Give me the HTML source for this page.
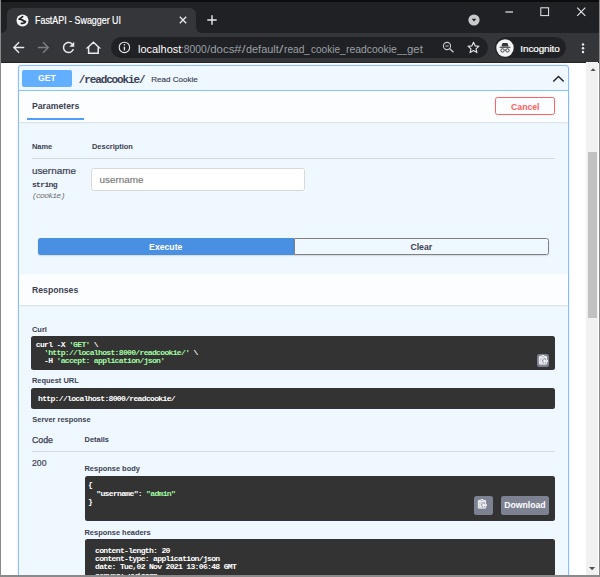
<!DOCTYPE html>
<html>
<head>
<meta charset="utf-8">
<title>FastAPI - Swagger UI</title>
<style>
html,body{margin:0;padding:0;}
body{width:600px;height:577px;overflow:hidden;background:#fff;position:relative;font-family:"Liberation Sans",sans-serif;color:#3b4151;}
#win{position:absolute;left:0;top:0;width:600px;height:577px;overflow:hidden;background:#fff;}
#win>div,#win>svg{position:absolute;}
.t{white-space:nowrap;}
.code{background:#333;border-radius:2.5px;}
.band{background:#fbfdff;box-shadow:0 1px 1.5px rgba(0,0,0,.1);}
.line{height:1px;background:#d4dae1;}
.btn7{background:#7d8293;border-radius:2.5px;}
</style>
</head>
<body>
<div id="win">
  <!-- browser frame -->
  <div style="left:0;top:0;width:600px;height:33px;background:#202124;"></div>
  <div style="left:7px;top:8px;width:189px;height:26px;background:#35363a;border-radius:6px 6px 0 0;"></div>
  <div style="left:1px;top:27px;width:6px;height:6px;background:#35363a;"></div>
  <div style="left:-5px;top:21px;width:12px;height:12px;background:#202124;border-radius:0 0 6px 0;"></div>
  <div style="left:196px;top:27px;width:6px;height:6px;background:#35363a;"></div>
  <div style="left:196px;top:21px;width:12px;height:12px;background:#202124;border-radius:0 0 0 6px;"></div>
  <div style="left:0;top:33px;width:600px;height:28.600px;background:#35363a;border-bottom:0.600px solid #222;"></div>
  <div style="left:111px;top:37px;width:377px;height:21.400px;border-radius:11px;background:#202124;"></div>
  <div style="left:495px;top:37.400px;width:71px;height:20.400px;border-radius:11px;background:#202124;"></div>

  <!-- favicon globe -->
  <svg style="left:16.400px;top:14px" width="13" height="13" viewBox="0 0 13 13">
    <circle cx="6.500" cy="6.500" r="6" fill="#f4f5f6"/>
    <path d="M6.600 2.600 L3.200 5.200 C4.500 5.100 5.400 5.400 6.300 6 C7.400 6.800 8.400 7.400 9.500 7.600 C9.200 8.800 7.600 9.600 5.500 9.300" stroke="#202124" stroke-width="1.800" fill="none" stroke-linejoin="round" stroke-linecap="round"/>
  </svg>
  <!-- tab close -->
  <svg style="left:178.500px;top:16px" width="8" height="8" viewBox="0 0 8 8"><path d="M0.800 0.800 L7.200 7.200 M7.200 0.800 L0.800 7.200" stroke="#e8eaed" stroke-width="1.300" fill="none"/></svg>
  <!-- new tab plus -->
  <svg style="left:207px;top:15px" width="10" height="10" viewBox="0 0 10 10"><path d="M5 0.300 V9.700 M0.300 5 H9.700" stroke="#e8eaed" stroke-width="1.400" fill="none"/></svg>
  <!-- tab search -->
  <svg style="left:468.200px;top:14.200px" width="12" height="12" viewBox="0 0 12 12"><circle cx="6" cy="6" r="5.600" fill="#c8cacc"/><path d="M3.700 4.800 H8.300 L6 7.600 Z" fill="#202124"/></svg>
  <!-- window controls -->
  <svg style="left:500px;top:4px" width="96" height="16" viewBox="0 0 96 16">
    <path d="M5.400 8 H13" stroke="#e8eaed" stroke-width="1.200" fill="none"/>
    <rect x="40.800" y="3.800" width="7.800" height="7.800" stroke="#e8eaed" stroke-width="1" fill="none"/>
    <path d="M77.200 3.700 L85.300 11.800 M85.300 3.700 L77.200 11.800" stroke="#e8eaed" stroke-width="1.100" fill="none"/>
  </svg>
  <!-- nav icons -->
  <svg style="left:9.650px;top:39.150px" width="17.100" height="17.100" viewBox="0 0 24 24"><path d="M20 11H7.830l5.590-5.590L12 4l-8 8 8 8 1.410-1.410L7.830 13H20v-2z" fill="#e8eaed"/></svg>
  <svg style="left:35.150px;top:39.150px" width="17.100" height="17.100" viewBox="0 0 24 24"><path d="M12 4l-1.410 1.410L16.170 11H4v2h12.170l-5.580 5.590L12 20l8-8z" fill="#7c7e82"/></svg>
  <svg style="left:59.950px;top:39.400px" width="17.100" height="17.100" viewBox="0 0 24 24"><path d="M17.650 6.350C16.200 4.900 14.210 4 12 4c-4.420 0-7.990 3.580-7.990 8s3.570 8 7.990 8c3.730 0 6.840-2.550 7.730-6h-2.080c-.820 2.330-3.040 4-5.650 4-3.310 0-6-2.690-6-6s2.690-6 6-6c1.660 0 3.140.690 4.220 1.780L13 11h7V4l-2.350 2.350z" fill="#e8eaed"/></svg>
  <svg style="left:85px;top:40px" width="17" height="16" viewBox="0 0 17 16"><path d="M2.500 7.700 L8.400 2.200 L14.300 7.700 H13.200 V13.200 H3.600 V7.700 Z" stroke="#e8eaed" stroke-width="1.500" fill="none" stroke-linejoin="miter"/></svg>
  <!-- info -->
  <svg style="left:118px;top:41.300px" width="13" height="13" viewBox="0 0 13 13"><circle cx="6.400" cy="6.400" r="5.200" stroke="#e8eaed" stroke-width="1.100" fill="none"/><path d="M6.400 5.700 V9.400" stroke="#e8eaed" stroke-width="1.300"/><circle cx="6.400" cy="3.800" r="0.800" fill="#e8eaed"/></svg>
  <!-- zoom-out -->
  <svg style="left:442.200px;top:41.400px" width="13" height="13" viewBox="0 0 13 13"><circle cx="5" cy="5" r="3.600" stroke="#c6c8cb" stroke-width="1.100" fill="none"/><path d="M7.700 7.700 L11.500 11.200" stroke="#c6c8cb" stroke-width="1.400"/><path d="M3.300 5 H6.700" stroke="#c6c8cb" stroke-width="1"/></svg>
  <!-- star -->
  <svg style="left:467.400px;top:41.200px" width="13" height="13" viewBox="0 0 14 14"><path d="M7 1.300 L8.700 5.200 L12.900 5.600 L9.700 8.400 L10.700 12.500 L7 10.300 L3.300 12.500 L4.300 8.400 L1.100 5.600 L5.300 5.200 Z" stroke="#e8eaed" stroke-width="1.200" fill="none" stroke-linejoin="round"/></svg>
  <!-- incognito avatar -->
  <svg style="left:496px;top:38.600px" width="18" height="18" viewBox="0 0 18 18"><circle cx="9" cy="9" r="8.700" fill="#f1f3f4"/><path d="M5.400 7.600 L6.500 4 H11.500 L12.600 7.600 Z" fill="#35363a"/><path d="M3.600 8.300 H14.400" stroke="#35363a" stroke-width="1"/><circle cx="6.500" cy="11.400" r="1.700" stroke="#35363a" stroke-width="0.900" fill="none"/><circle cx="11.500" cy="11.400" r="1.700" stroke="#35363a" stroke-width="0.900" fill="none"/><path d="M8.200 11 H9.800" stroke="#35363a" stroke-width="0.800"/></svg>
  <!-- menu dots -->
  <svg style="left:580.700px;top:43px" width="4" height="11" viewBox="0 0 4 11"><circle cx="2" cy="1.500" r="1.250" fill="#e8eaed"/><circle cx="2" cy="5.200" r="1.250" fill="#e8eaed"/><circle cx="2" cy="8.900" r="1.250" fill="#e8eaed"/></svg>

  <!-- operation block -->
  <div style="left:18px;top:65.200px;width:549.300px;height:530px;border:1px solid #86c1fe;border-radius:3px;background:#eff7ff;box-shadow:0 0 2px rgba(0,0,0,.15);"></div>
  <div style="left:21.900px;top:69.700px;width:50.100px;height:17px;background:#61affe;border-radius:2px;"></div>
  <svg style="left:552px;top:72.500px" width="13" height="12" viewBox="0 0 13 12"><path d="M1.300 8.600 L6.500 3.500 L11.700 8.600" stroke="#222" stroke-width="1.400" fill="none"/></svg>
  <div style="left:19px;top:90px;width:549px;height:1px;background:#86c1fe;"></div>

  <!-- Parameters header band -->
  <div class="band" style="left:19px;top:91px;width:549.300px;height:30.800px;"></div>
  <div style="left:26.800px;top:117.900px;width:57.200px;height:2.500px;background:#4e9efc;"></div>
  <div style="left:495px;top:97px;width:58.200px;height:16.200px;border:1.200px solid #ff6060;border-radius:2.500px;"></div>

  <!-- params table -->
  <div class="line" style="left:32px;top:157.700px;width:523px;"></div>
  <div style="left:91px;top:168.300px;width:212px;height:20.800px;border:0.800px solid #d9d9d9;border-radius:2.500px;background:#fff;"></div>

  <!-- execute / clear -->
  <div style="left:37.500px;top:237.800px;width:256.500px;height:17.500px;background:#4990e2;border-radius:2.500px 0 0 2.500px;box-shadow:0 1px 1.500px rgba(0,0,0,.12);"></div>
  <div style="left:294px;top:237.800px;width:252.700px;height:15.400px;border:1.200px solid #808080;border-radius:0 2.500px 2.500px 0;box-shadow:0 1px 1.500px rgba(0,0,0,.12);"></div>

  <!-- Responses header band -->
  <div class="band" style="left:19px;top:273.700px;width:549.300px;height:31.700px;"></div>

  <!-- code blocks -->
  <div class="code" style="left:31.200px;top:336.300px;width:523.800px;height:33.300px;"></div>
  <div class="btn7" style="left:536.700px;top:354.200px;width:12.500px;height:12.500px;"></div>
  <svg style="left:537.900px;top:355.400px" width="10.540" height="9.920" viewBox="0 0 17 16"><g transform="translate(2,-1)"><path fill="#fff" stroke="#fff" stroke-width="0.800" fill-rule="evenodd" d="M2 13h4v1H2v-1zm5-6H2v1h5V7zm2 3V8l-3 3 3 3v-2h5v-2H9zM4.500 9H2v1h2.500V9zM2 12h2.500v-1H2v1zm9 1h1v2c-.020.280-.110.520-.300.700-.190.180-.420.280-.700.300H1c-.550 0-1-.450-1-1V4c0-.550.450-1 1-1h3c0-1.110.890-2 2-2 1.110 0 2 .890 2 2h3c.550 0 1 .450 1 1v5h-1V6H1v9h10v-2zM2 5h8c0-.550-.450-1-1-1H8c-.550 0-1-.450-1-1s-.450-1-1-1-1 .450-1 1-.450 1-1 1H3c-.550 0-1 .450-1 1z"/></g></svg>
  <div class="code" style="left:31.200px;top:388.200px;width:523.800px;height:20.500px;"></div>
  <div class="line" style="left:32px;top:450.800px;width:523px;"></div>
  <div class="code" style="left:84.500px;top:476.300px;width:470.500px;height:45px;"></div>
  <div class="btn7" style="left:473.800px;top:496.300px;width:19.200px;height:18.700px;"></div>
  <svg style="left:476.900px;top:499.100px" width="10.540" height="9.920" viewBox="0 0 17 16"><g transform="translate(2,-1)"><path fill="#fff" stroke="#fff" stroke-width="0.800" fill-rule="evenodd" d="M2 13h4v1H2v-1zm5-6H2v1h5V7zm2 3V8l-3 3 3 3v-2h5v-2H9zM4.500 9H2v1h2.500V9zM2 12h2.500v-1H2v1zm9 1h1v2c-.020.280-.110.520-.300.700-.190.180-.420.280-.700.300H1c-.550 0-1-.450-1-1V4c0-.550.450-1 1-1h3c0-1.110.890-2 2-2 1.110 0 2 .890 2 2h3c.550 0 1 .450 1 1v5h-1V6H1v9h10v-2zM2 5h8c0-.550-.450-1-1-1H8c-.550 0-1-.450-1-1s-.450-1-1-1-1 .450-1 1-.450 1-1 1H3c-.550 0-1 .450-1 1z"/></g></svg>
  <div class="btn7" style="left:500.500px;top:496.300px;width:48.800px;height:18.700px;"></div>
  <div class="code" style="left:84.500px;top:539.200px;width:470.500px;height:60px;"></div>

  <div class="t" id="ttl" style="top:13.83px;font-size:10.30px;line-height:13px;font-family:'Liberation Sans',sans-serif;color:#fff;left:35.40px;transform:scaleX(0.8636);transform-origin:0 0;-webkit-text-stroke:0.2px #fff;">FastAPI - Swagger UI</div>
  <div class="t" id="url1" style="top:40.65px;font-size:11.70px;line-height:15px;font-family:'Liberation Sans',sans-serif;color:#fff;left:137.50px;transform:scaleX(0.9384);transform-origin:0 0;">localhost</div>
  <div class="t" id="url2" style="top:40.65px;font-size:11.70px;line-height:15px;font-family:'Liberation Sans',sans-serif;color:#9aa0a6;left:180.80px;transform:scaleX(0.8821);transform-origin:0 0;">:8000</div>
  <div class="t" id="url3" style="top:40.65px;font-size:11.70px;line-height:15px;font-family:'Liberation Sans',sans-serif;color:#9aa0a6;left:206.60px;transform:scaleX(0.9808);transform-origin:0 0;">/docs</div>
  <div class="t" id="url4" style="top:40.65px;font-size:11.70px;line-height:15px;font-family:'Liberation Sans',sans-serif;color:#9aa0a6;left:234.00px;transform:scaleX(1.1795);transform-origin:0 0;">#/</div>
  <div class="t" id="url5" style="top:40.65px;font-size:11.70px;line-height:15px;font-family:'Liberation Sans',sans-serif;color:#9aa0a6;left:245.50px;transform:scaleX(0.9318);transform-origin:0 0;">default</div>
  <div class="t" id="url6" style="top:40.65px;font-size:11.70px;line-height:15px;font-family:'Liberation Sans',sans-serif;color:#9aa0a6;left:279.00px;transform:scaleX(1.3538);transform-origin:0 0;">/</div>
  <div class="t" id="url7" style="top:40.65px;font-size:11.70px;line-height:15px;font-family:'Liberation Sans',sans-serif;color:#9aa0a6;left:283.50px;transform:scaleX(0.8758);transform-origin:0 0;">read</div>
  <div class="t" id="url8" style="top:40.65px;font-size:11.70px;line-height:15px;font-family:'Liberation Sans',sans-serif;color:#9aa0a6;left:304.30px;transform:scaleX(0.8441);transform-origin:0 0;">_</div>
  <div class="t" id="url9" style="top:40.65px;font-size:11.70px;line-height:15px;font-family:'Liberation Sans',sans-serif;color:#9aa0a6;left:310.60px;transform:scaleX(0.8581);transform-origin:0 0;">cookie</div>
  <div class="t" id="url10" style="top:40.65px;font-size:11.70px;line-height:15px;font-family:'Liberation Sans',sans-serif;color:#9aa0a6;left:340.30px;transform:scaleX(0.8441);transform-origin:0 0;">_</div>
  <div class="t" id="url11" style="top:40.65px;font-size:11.70px;line-height:15px;font-family:'Liberation Sans',sans-serif;color:#9aa0a6;left:346.40px;transform:scaleX(0.8883);transform-origin:0 0;">readcookie</div>
  <div class="t" id="url12" style="top:40.65px;font-size:11.70px;line-height:15px;font-family:'Liberation Sans',sans-serif;color:#9aa0a6;left:397.20px;transform:scaleX(0.7683);transform-origin:0 0;">__</div>
  <div class="t" id="url13" style="top:40.65px;font-size:11.70px;line-height:15px;font-family:'Liberation Sans',sans-serif;color:#9aa0a6;left:407.20px;transform:scaleX(0.9723);transform-origin:0 0;">get</div>
  <div class="t" id="inc" style="top:41.57px;font-size:9.90px;line-height:13px;font-family:'Liberation Sans',sans-serif;color:#fff;left:520.30px;letter-spacing:-0.077px;-webkit-text-stroke:0.2px #fff;">Incognito</div>
  <div class="t" id="get" style="top:73.09px;font-size:8.68px;line-height:11px;font-family:'Liberation Sans',sans-serif;color:#fff;font-weight:bold;left:22.00px;width:50.00px;text-align:center;">GET</div>
  <div class="t" id="path" style="top:72.67px;font-size:11.00px;line-height:14px;font-family:'Liberation Mono',monospace;color:#3b4151;font-weight:bold;left:78.75px;letter-spacing:-1.122px;">/readcookie/</div>
  <div class="t" id="desc" style="top:74.81px;font-size:8.06px;line-height:10px;font-family:'Liberation Sans',sans-serif;color:#3b4151;left:151.25px;-webkit-text-stroke:0.15px #3b4151;">Read Cookie</div>
  <div class="t" id="par" style="top:101.19px;font-size:8.68px;line-height:11px;font-family:'Liberation Sans',sans-serif;color:#3b4151;font-weight:bold;left:32.00px;">Parameters</div>
  <div class="t" id="can" style="top:101.69px;font-size:8.68px;line-height:11px;font-family:'Liberation Sans',sans-serif;color:#ff6060;font-weight:bold;left:495.00px;width:60.60px;text-align:center;">Cancel</div>
  <div class="t" id="hname" style="top:142.22px;font-size:7.44px;line-height:10px;font-family:'Liberation Sans',sans-serif;color:#3b4151;font-weight:bold;left:31.90px;">Name</div>
  <div class="t" id="hdesc" style="top:142.22px;font-size:7.44px;line-height:10px;font-family:'Liberation Sans',sans-serif;color:#3b4151;font-weight:bold;left:92.00px;">Description</div>
  <div class="t" id="pname" style="top:164.26px;font-size:9.92px;line-height:13px;font-family:'Liberation Sans',sans-serif;color:#3b4151;left:31.90px;-webkit-text-stroke:0.2px #3b4151;">username</div>
  <div class="t" id="ptype" style="top:178.94px;font-size:8.10px;line-height:11px;font-family:'Liberation Mono',monospace;color:#3b4151;font-weight:bold;left:31.90px;letter-spacing:-0.693px;">string</div>
  <div class="t" id="pin" style="top:190.44px;font-size:8.10px;line-height:11px;font-family:'Liberation Mono',monospace;color:#6e6e6e;left:32.00px;letter-spacing:-0.795px;font-style:italic;">(cookie)</div>
  <div class="t" id="ph" style="top:172.76px;font-size:9.92px;line-height:13px;font-family:'Liberation Sans',sans-serif;color:#787878;left:99.50px;-webkit-text-stroke:0.15px #787878;">username</div>
  <div class="t" id="exe" style="top:242.19px;font-size:8.68px;line-height:11px;font-family:'Liberation Sans',sans-serif;color:#fff;font-weight:bold;left:37.50px;width:256.50px;text-align:center;">Execute</div>
  <div class="t" id="clr" style="top:242.19px;font-size:8.68px;line-height:11px;font-family:'Liberation Sans',sans-serif;color:#3b4151;font-weight:bold;left:294.00px;width:254.50px;text-align:center;">Clear</div>
  <div class="t" id="resp" style="top:285.19px;font-size:8.68px;line-height:11px;font-family:'Liberation Sans',sans-serif;color:#3b4151;font-weight:bold;left:32.00px;">Responses</div>
  <div class="t" id="curl" style="top:324.77px;font-size:7.44px;line-height:10px;font-family:'Liberation Sans',sans-serif;color:#3b4151;font-weight:bold;left:32.00px;">Curl</div>
  <div class="t" id="rurl" style="top:376.27px;font-size:7.44px;line-height:10px;font-family:'Liberation Sans',sans-serif;color:#3b4151;font-weight:bold;left:32.00px;">Request URL</div>
  <div class="t" id="srv" style="top:414.52px;font-size:7.44px;line-height:10px;font-family:'Liberation Sans',sans-serif;color:#3b4151;font-weight:bold;left:32.30px;">Server response</div>
  <div class="t" id="code" style="top:434.55px;font-size:8.80px;line-height:11px;font-family:'Liberation Sans',sans-serif;color:#3b4151;left:31.90px;-webkit-text-stroke:0.25px #3b4151;">Code</div>
  <div class="t" id="det" style="top:434.62px;font-size:7.44px;line-height:10px;font-family:'Liberation Sans',sans-serif;color:#3b4151;font-weight:bold;left:84.60px;">Details</div>
  <div class="t" id="c200" style="top:457.59px;font-size:8.68px;line-height:11px;font-family:'Liberation Sans',sans-serif;color:#3b4151;left:32.00px;-webkit-text-stroke:0.2px #3b4151;">200</div>
  <div class="t" id="rbody" style="top:464.32px;font-size:7.44px;line-height:10px;font-family:'Liberation Sans',sans-serif;color:#3b4151;font-weight:bold;left:84.50px;">Response body</div>
  <div class="t" id="rhead" style="top:527.52px;font-size:7.44px;line-height:10px;font-family:'Liberation Sans',sans-serif;color:#3b4151;font-weight:bold;left:84.50px;">Response headers</div>
  <div class="t" id="dl" style="top:500.09px;font-size:8.68px;line-height:11px;font-family:'Liberation Sans',sans-serif;color:#fff;font-weight:bold;left:500.50px;width:48.75px;text-align:center;">Download</div>
  <div class="t" id="c1" style="top:339.24px;font-size:8.10px;line-height:11px;font-family:'Liberation Mono',monospace;color:#fff;font-weight:bold;left:35.75px;letter-spacing:-0.708px;white-space:pre;">curl -X <span style="color:#a2fca2">'GET'</span> \</div>
  <div class="t" id="c2" style="top:347.34px;font-size:8.10px;line-height:11px;font-family:'Liberation Mono',monospace;color:#fff;font-weight:bold;left:35.75px;letter-spacing:-0.707px;white-space:pre;">  <span style="color:#a2fca2">'http://localhost:8000/readcookie/'</span> \</div>
  <div class="t" id="c3" style="top:355.44px;font-size:8.10px;line-height:11px;font-family:'Liberation Mono',monospace;color:#fff;font-weight:bold;left:35.75px;letter-spacing:-0.708px;white-space:pre;">  -H <span style="color:#a2fca2">'accept: application/json'</span></div>
  <div class="t" id="u1" style="top:392.74px;font-size:8.10px;line-height:11px;font-family:'Liberation Mono',monospace;color:#fff;font-weight:bold;left:38.00px;letter-spacing:-0.707px;white-space:pre;">http://localhost:8000/readcookie/</div>
  <div class="t" id="b1" style="top:479.24px;font-size:8.10px;line-height:11px;font-family:'Liberation Mono',monospace;color:#fff;font-weight:bold;left:88.00px;letter-spacing:-0.709px;white-space:pre;">{</div>
  <div class="t" id="b2" style="top:487.74px;font-size:8.10px;line-height:11px;font-family:'Liberation Mono',monospace;color:#fff;font-weight:bold;left:88.00px;letter-spacing:-0.707px;white-space:pre;">  "username": <span style="color:#a2fca2">"admin"</span></div>
  <div class="t" id="b3" style="top:496.14px;font-size:8.10px;line-height:11px;font-family:'Liberation Mono',monospace;color:#fff;font-weight:bold;left:88.00px;letter-spacing:-0.709px;white-space:pre;">}</div>
  <div class="t" id="h1" style="top:544.64px;font-size:8.10px;line-height:11px;font-family:'Liberation Mono',monospace;color:#fff;font-weight:bold;left:95.00px;letter-spacing:-0.708px;white-space:pre;">content-length: 20</div>
  <div class="t" id="h2" style="top:552.94px;font-size:8.10px;line-height:11px;font-family:'Liberation Mono',monospace;color:#fff;font-weight:bold;left:95.00px;letter-spacing:-0.707px;white-space:pre;">content-type: application/json</div>
  <div class="t" id="h3" style="top:561.34px;font-size:8.10px;line-height:11px;font-family:'Liberation Mono',monospace;color:#fff;font-weight:bold;left:95.00px;letter-spacing:-0.707px;white-space:pre;">date: Tue,02 Nov 2021 13:06:48 GMT</div>
  <div class="t" id="h4" style="top:569.64px;font-size:8.10px;line-height:11px;font-family:'Liberation Mono',monospace;color:#fff;font-weight:bold;left:95.00px;letter-spacing:-0.707px;white-space:pre;">server: uvicorn</div>

  <!-- scrollbar -->
  <div style="left:586.200px;top:62px;width:12px;height:514px;background:#f1f1f1;"></div>
  <div style="left:587.700px;top:151.800px;width:9.800px;height:166.200px;background:#c1c1c1;"></div>
  <svg style="left:589.500px;top:67.700px" width="6.200" height="3.500" viewBox="0 0 7 4"><path d="M0 4 L3.500 0.300 L7 4 Z" fill="#505050"/></svg>
  <svg style="left:589.400px;top:567px" width="6.200" height="3.500" viewBox="0 0 7 4"><path d="M0 0 L3.500 3.700 L7 0 Z" fill="#505050"/></svg>

  <!-- outer screenshot borders -->
  <div style="left:0;top:0;width:600px;height:1.500px;background:#0c0c0e;"></div>
  <div style="left:0;top:0;width:1px;height:577px;background:#8a8a8a;"></div>
  <div style="left:598.500px;top:0;width:1.500px;height:577px;background:#8a8a8a;"></div>
  <div style="left:0;top:575px;width:600px;height:2px;background:#8a8a8a;"></div>
</div>
</body>
</html>
